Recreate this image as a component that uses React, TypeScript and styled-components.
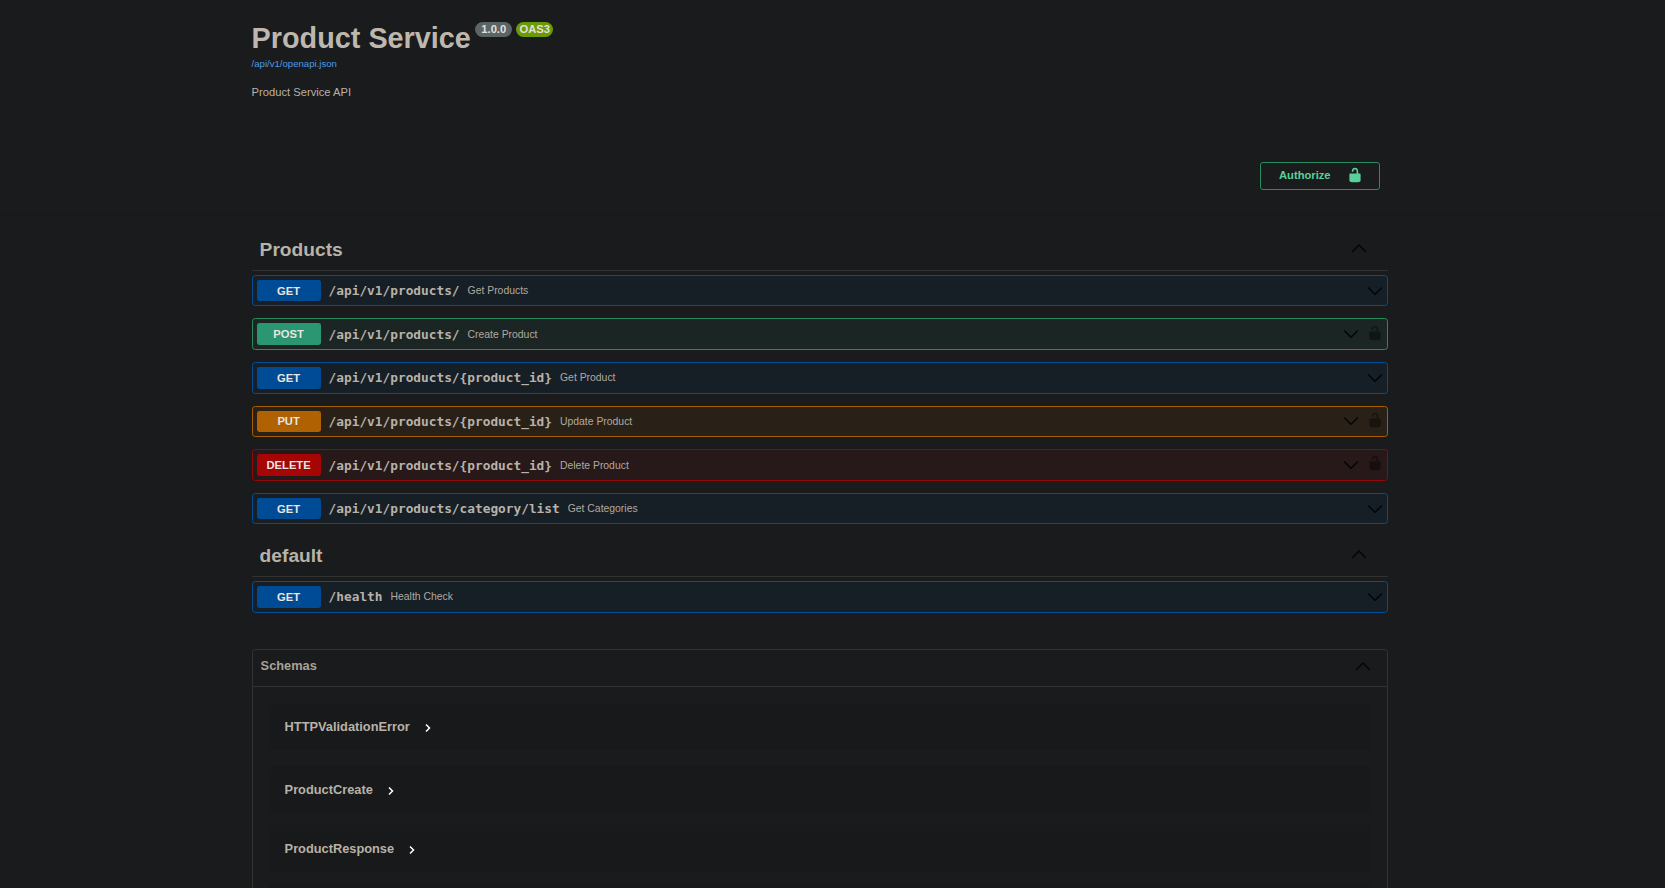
import React from 'react';
import styled, { createGlobalStyle } from 'styled-components';

const sans = '"Liberation Sans", Arial, sans-serif';
const mono = '"DejaVu Sans Mono", monospace';

type Method = 'GET' | 'POST' | 'PUT' | 'DELETE';

const palette: Record<Method, { solid: string; border: string; tint: string }> = {
  GET: { solid: '#004b96', border: '#024d97', tint: '#161e26' },
  POST: { solid: '#2b9672', border: '#278c5b', tint: '#1b2624' },
  PUT: { solid: '#b06203', border: '#a65e03', tint: '#292118' },
  DELETE: { solid: '#a50505', border: '#950606', tint: '#271819' },
};

const GlobalStyle = createGlobalStyle`
  * { box-sizing: border-box; }
  html, body { margin: 0; background: #1a1b1d; overflow: hidden; }
  body { font-family: ${sans}; color: #b8b2a8; }
  #root { height: 888px; overflow: hidden; }
`;

const Page = styled.div`
  width: 100%;
`;

const Wrapper = styled.div`
  width: 1136px;
  margin: 0 0 0 251.6px;
`;

const Info = styled.header`
  height: 138px;
  padding-top: 20px;
`;

const TitleRow = styled.div`
  display: flex;
  align-items: flex-start;
  height: 36px;
`;

const Title = styled.h1`
  margin: 1px 4.4px 0 0;
  font-size: 28.8px;
  line-height: 34px;
  font-weight: 700;
  color: #bdb7ae;
  white-space: nowrap;
`;

const Badge = styled.span<{ $color: string; $width: number }>`
  width: ${(p) => p.$width}px;
  height: 15px;
  margin: 2px 4px 0 0;
  border-radius: 8px;
  background: ${(p) => p.$color};
  color: #e4e0da;
  font-size: 11.2px;
  line-height: 14px;
  font-weight: 700;
  text-align: center;
`;

const SpecLink = styled.a`
  display: block;
  font-size: 9.6px;
  line-height: 15px;
  color: #4e9ae6;
`;

const Description = styled.p`
  margin: 13px 0 0;
  font-size: 11.2px;
  line-height: 16px;
`;

const Scheme = styled.div`
  height: 76px;
  padding-top: 24px;
  box-shadow: 0 1px 2px 0 rgba(0, 0, 0, 0.07);
`;

const SchemeInner = styled(Wrapper)`
  display: flex;
  justify-content: flex-end;
  padding-right: 7.6px;
`;

const AuthorizeButton = styled.button`
  display: flex;
  align-items: center;
  justify-content: space-between;
  width: 120px;
  height: 28px;
  padding: 0 16px 2px 18px;
  border: 1px solid #278c5b;
  border-radius: 3px;
  background: transparent;
  color: #59d09a;
  font: 700 11.2px ${sans};
`;

const AuthorizeLabel = styled.span`
  line-height: 14px;
`;

const Sections = styled(Wrapper)`
  padding-top: 16px;
`;

const SectionHead = styled.h2<{ $gap: number }>`
  display: flex;
  align-items: center;
  justify-content: space-between;
  height: 41px;
  margin: 0 0 ${(p) => p.$gap}px;
  padding: 0 20.6px 0 8px;
  border-bottom: 1px solid #303332;
  font-size: 19.2px;
  font-weight: 700;

  svg { margin-bottom: 4px; }
`;

const Operations = styled.div`
  display: flex;
  flex-direction: column;
  gap: 12px;
`;

const Operation = styled.div<{ $method: Method }>`
  display: flex;
  align-items: center;
  height: 31.6px;
  padding: 0 3.6px 0 4px;
  border: 1px solid ${(p) => palette[p.$method].border};
  border-radius: 3.2px;
  background: ${(p) => palette[p.$method].tint};
`;

const MethodTag = styled.span<{ $method: Method }>`
  width: 64px;
  height: 21.6px;
  padding-top: 0.8px;
  border-radius: 2.4px;
  background: ${(p) => palette[p.$method].solid};
  color: #e8e6e3;
  font-size: 11.2px;
  font-weight: 700;
  line-height: 21.6px;
  text-align: center;
  text-shadow: 0 1px 0 rgba(0, 0, 0, 0.1);
`;

const Path = styled.span`
  padding: 1.2px 8px 0;
  font: 700 12.8px/20px ${mono};
`;

const Summary = styled.span`
  flex: 1;
  padding-top: 1.2px;
  font-size: 10.4px;
  line-height: 20px;
  color: #b0aaa0;
`;

const RowIcons = styled.span`
  display: flex;
  align-items: center;
  gap: 8px;
`;

const RowLock = styled.span`
  display: flex;
  margin-bottom: 3px;
`;

const Models = styled.section`
  margin-top: 36.4px;
  height: 300px;
  border: 1px solid #303332;
  border-radius: 3.2px;
`;

const ModelsHead = styled.h4`
  display: flex;
  align-items: center;
  justify-content: space-between;
  height: 37px;
  margin: 0 0 16.5px;
  padding: 0 15.6px 4px 8px;
  border-bottom: 1px solid #303332;
  font-size: 12.8px;
  color: #a8a298;
`;

const Model = styled.div<{ $gap: number }>`
  display: flex;
  align-items: center;
  height: 47px;
  margin: 0 16.4px ${(p) => p.$gap}px 16px;
  padding: 0 16px 1px;
  border-radius: 3.2px;
  background: #18191a;
  font-size: 12.8px;
  font-weight: 700;
`;

const ModelArrow = styled.svg`
  margin: 3px 0 0 14.2px;
`;

const Arrow = ({ up = false }: { up?: boolean }) => (
  <svg width="16" height="16" viewBox="0 0 16 16" fill="none" stroke="#030404" strokeWidth="1.4" strokeLinecap="round">
    <path d={up ? 'M1.6 11.4 8 5.1l6.4 6.3' : 'M1.6 5 8 11.3 14.4 5'} />
  </svg>
);

const Lock = ({ color = '#000', opacity = 1 }: { color?: string; opacity?: number }) => (
  <svg width="16" height="16" viewBox="0 0 20 20" fill={color} opacity={opacity}>
    <path d="M15.8 8H14V5.6C14 2.703 12.665 1 10 1 7.334 1 6 2.703 6 5.6V6h2v-.801C8 3.754 8.797 3 10 3c1.203 0 2 .754 2 2.199V8H4c-.553 0-1 .646-1 1.199V17c0 .549.428 1.139.951 1.307l1.197.387C5.672 18.861 6.55 19 7.1 19h5.8c.549 0 1.428-.139 1.951-.307l1.196-.387c.524-.167.953-.757.953-1.306V9.199C17 8.646 16.352 8 15.8 8z" />
  </svg>
);

type Op = { method: Method; path: string; summary: string; locked?: boolean };

const productOps: Op[] = [
  { method: 'GET', path: '/api/v1/products/', summary: 'Get Products' },
  { method: 'POST', path: '/api/v1/products/', summary: 'Create Product', locked: true },
  { method: 'GET', path: '/api/v1/products/{product_id}', summary: 'Get Product' },
  { method: 'PUT', path: '/api/v1/products/{product_id}', summary: 'Update Product', locked: true },
  { method: 'DELETE', path: '/api/v1/products/{product_id}', summary: 'Delete Product', locked: true },
  { method: 'GET', path: '/api/v1/products/category/list', summary: 'Get Categories' },
];

const defaultOps: Op[] = [{ method: 'GET', path: '/health', summary: 'Health Check' }];

const models = ['HTTPValidationError', 'ProductCreate', 'ProductResponse', ''];

const OperationList = ({ items }: { items: Op[] }) => (
  <Operations>
    {items.map((op) => (
      <Operation key={op.method + op.path} $method={op.method}>
        <MethodTag $method={op.method}>{op.method}</MethodTag>
        <Path>{op.path}</Path>
        <Summary>{op.summary}</Summary>
        <RowIcons>
          <Arrow />
          {op.locked && (
            <RowLock>
              <Lock opacity={0.4} />
            </RowLock>
          )}
        </RowIcons>
      </Operation>
    ))}
  </Operations>
);

const DefaultSection = styled.div`
  padding-top: 11.6px;
`;

export default function App() {
  return (
    <Page>
      <GlobalStyle />
      <Wrapper>
        <Info>
          <TitleRow>
            <Title>Product Service</Title>
            <Badge $color="#5b6467" $width={37}>1.0.0</Badge>
            <Badge $color="#6a9a05" $width={37}>OAS3</Badge>
          </TitleRow>
          <SpecLink>/api/v1/openapi.json</SpecLink>
          <Description>Product Service API</Description>
        </Info>
      </Wrapper>
      <Scheme>
        <SchemeInner>
          <AuthorizeButton>
            <AuthorizeLabel>Authorize</AuthorizeLabel>
            <Lock color="#59d09a" />
          </AuthorizeButton>
        </SchemeInner>
      </Scheme>
      <Sections>
        <SectionHead $gap={3.8}>
          Products
          <Arrow up />
        </SectionHead>
        <OperationList items={productOps} />
        <DefaultSection>
          <SectionHead $gap={4}>
            default
            <Arrow up />
          </SectionHead>
          <OperationList items={defaultOps} />
        </DefaultSection>
        <Models>
          <ModelsHead>
            Schemas
            <Arrow up />
          </ModelsHead>
          {models.map((name, i) => (
            <Model key={i} $gap={i === 0 ? 16 : 12}>
              {name}
              {name && (
                <ModelArrow width="8" height="10" viewBox="0 0 8 10" fill="none" stroke="#fff" strokeWidth="1.5">
                  <path d="M2 1.5 5.5 5 2 8.5" />
                </ModelArrow>
              )}
            </Model>
          ))}
        </Models>
      </Sections>
    </Page>
  );
}
